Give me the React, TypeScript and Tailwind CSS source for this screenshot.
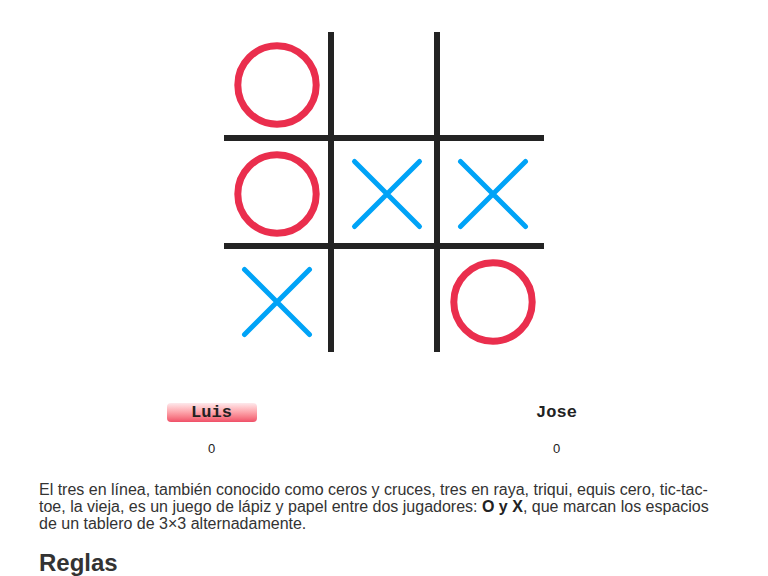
const board: ('O' | 'X' | '')[] = ['O', '', '', 'O', 'X', 'X', 'X', '', 'O']

const cellClass = [
    'w-[104px] h-[103px]',
    'w-[112px] h-[103px] border-x-[6px]',
    'w-[104px] h-[103px]',
    'w-[104px] h-[114px] border-y-[6px]',
    'w-[112px] h-[114px] border-[6px]',
    'w-[104px] h-[114px] border-y-[6px]',
    'w-[104px] h-[103px]',
    'w-[112px] h-[103px] border-x-[6px]',
    'w-[104px] h-[103px]',
]

export default function App() {
    return (
        <div className="min-h-screen bg-white text-[#333] font-['Liberation_Sans',Arial,sans-serif]">
            {/* Board */}
            <div className="pt-[32px] flex justify-center">
                <div className="grid grid-cols-[104px_112px_104px] w-[320px]">
                    {board.map((mark, i) => (
                        <div key={i} className={`${cellClass[i]} border-[#232323]`}>
                            {mark === 'O' && <OMark />}
                            {mark === 'X' && <XMark />}
                        </div>
                    ))}
                </div>
            </div>

            <div className="w-[690px] mx-auto">
                {/* Players */}
                <div className="grid grid-cols-2 mt-[51px]">
                    <div className="flex flex-col items-center">
                        <div className="w-[90px] h-[19px] rounded-[4px] bg-gradient-to-b from-[#fde9ec] to-[#ef4f68] flex items-center justify-center font-['Liberation_Mono',monospace] font-bold text-[17px] text-[#222]">
                            Luis
                        </div>
                        <div className="mt-[17px] text-[13px] text-[#222]">0</div>
                    </div>
                    <div className="flex flex-col items-center">
                        <div className="h-[19px] flex items-center font-['Liberation_Mono',monospace] font-bold text-[17px] text-[#222]">
                            Jose
                        </div>
                        <div className="mt-[17px] text-[13px] text-[#222]">0</div>
                    </div>
                </div>

                {/* Description */}
                <p className="mt-[22px] text-[16px] leading-[17px]">
                    El tres en línea, también conocido como ceros y cruces, tres en raya, triqui, equis cero, tic-tac-toe, la vieja, es un juego de lápiz y papel entre dos jugadores: <b className="text-[#222]">O y X</b>, que marcan los espacios de un tablero de 3×3 alternadamente.
                </p>
                <h2 className="mt-[17px] text-[24px] font-bold leading-[28px]">Reglas</h2>
            </div>
        </div>
    )
}

function OMark() {
    return (
        <svg width="100" height="100" viewBox="0 0 100 100" className="overflow-visible">
            <circle cx="53" cy="53" r="39.2" fill="none" stroke="#ea2e4d" strokeWidth="7" />
        </svg>
    )
}

function XMark() {
    return (
        <svg width="100" height="100" viewBox="0 0 100 100" className="overflow-visible">
            <path d="M20.5 20.5L85.5 85.5M85.5 20.5L20.5 85.5" stroke="#00a3f7" strokeWidth="5" strokeLinecap="round" />
        </svg>
    )
}
